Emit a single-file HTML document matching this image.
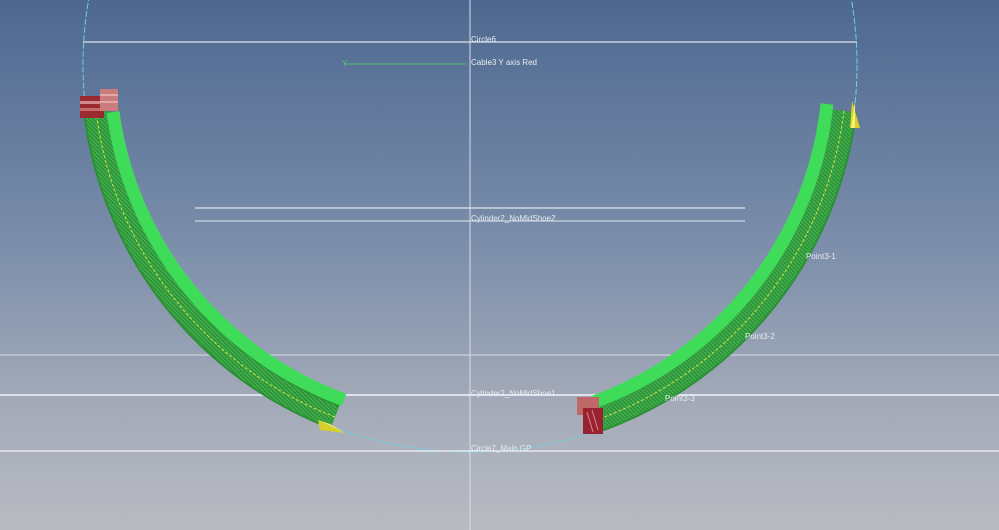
<!DOCTYPE html>
<html><head><meta charset="utf-8"><style>
html,body{margin:0;padding:0;width:999px;height:530px;overflow:hidden}
svg{display:block}
text{font-family:"Liberation Sans",sans-serif;font-size:8px;fill:#e8ecf2}
</style></head><body>
<svg width="999" height="530" viewBox="0 0 999 530" xmlns="http://www.w3.org/2000/svg">
<defs>
<linearGradient id="bg" x1="0" y1="0" x2="0" y2="1">
<stop offset="0" stop-color="#4d6890"/>
<stop offset="0.45" stop-color="#7a8daa"/>
<stop offset="0.75" stop-color="#a2a9b8"/>
<stop offset="1" stop-color="#b9bbc2"/>
</linearGradient>
<pattern id="hatch" width="4" height="4" patternUnits="userSpaceOnUse">
<rect width="4" height="4" fill="#2f9a3a"/>
<path d="M0 0L4 4" stroke="#55c060" stroke-width="1"/>
</pattern>
</defs>
<rect width="999" height="530" fill="url(#bg)"/>
<!-- cyan circle -->
<circle cx="470" cy="65" r="387" fill="none" stroke="#6fd0e0" stroke-width="1" stroke-dasharray="6 2"/>
<!-- lines -->
<line x1="470" y1="0" x2="470" y2="530" stroke="#d8dde6" stroke-width="1"/>
<line x1="83" y1="42" x2="857" y2="42" stroke="#dfe4ec" stroke-width="1.2"/>
<line x1="195" y1="208" x2="745" y2="208" stroke="#dfe4ec" stroke-width="1.2"/>
<line x1="195" y1="221" x2="745" y2="221" stroke="#dfe4ec" stroke-width="1"/>
<line x1="0" y1="355" x2="999" y2="355" stroke="#d8dce4" stroke-width="1"/>
<line x1="0" y1="395" x2="999" y2="395" stroke="#f2f4f7" stroke-width="1.5"/>
<line x1="0" y1="451" x2="999" y2="451" stroke="#f2f4f7" stroke-width="1.2"/>
<line x1="345" y1="64" x2="466" y2="64" stroke="#4fc07a" stroke-width="1"/>
<!-- left band -->
<path d="M335 417 A377 377 0 0 1 96 111" fill="none" stroke="#2b8f36" stroke-width="26"/>
<path d="M335 417 A377 377 0 0 1 96 111" fill="none" stroke="url(#hatch)" stroke-width="22" opacity="0.7"/>
<path d="M335 417 A377 377 0 0 1 96 111" fill="none" stroke="#d8e04a" stroke-width="1" stroke-dasharray="3 2"/>
<path d="M344 400 A358 358 0 0 1 113 112" fill="none" stroke="#3fdc5a" stroke-width="13"/>
<!-- right band -->
<path d="M844 111 A377 377 0 0 1 599 419" fill="none" stroke="#2b8f36" stroke-width="26"/>
<path d="M844 111 A377 377 0 0 1 599 419" fill="none" stroke="url(#hatch)" stroke-width="22" opacity="0.7"/>
<path d="M844 111 A377 377 0 0 1 599 419" fill="none" stroke="#d8e04a" stroke-width="1" stroke-dasharray="3 2"/>
<path d="M827 104 A358 358 0 0 1 594 402" fill="none" stroke="#3fdc5a" stroke-width="13"/>
<!-- red blocks -->
<rect x="80" y="96" width="24" height="22" fill="#9a2a30"/>
<rect x="80" y="101" width="24" height="3" fill="#d58a8a"/>
<rect x="80" y="108" width="24" height="3" fill="#c86a6a"/>
<rect x="100" y="89" width="18" height="22" fill="#c87c7c"/>
<rect x="100" y="94" width="18" height="2" fill="#e2a7a7"/>
<rect x="100" y="101" width="18" height="2" fill="#e2a7a7"/>
<rect x="577" y="397" width="22" height="18" fill="#c06868"/>
<rect x="583" y="408" width="20" height="26" fill="#9a2230"/>
<path d="M587 412 L593 432 M592 410 L598 430" stroke="#d98a8a" stroke-width="1"/>
<!-- yellow cones -->
<path d="M318 420 L345 433 L320 430 Z" fill="#d8d02a"/>
<path d="M318 420 L345 433 L330 424 Z" fill="#f2ea6a"/>
<path d="M852 101 L850 128 L860 128 Z" fill="#d8d02a"/>
<path d="M855 101 L851 128 L855 128 Z" fill="#f5ef7a"/>
<!-- labels -->
<text x="471" y="42">Circle6</text>
<text x="471" y="65">Cable3 Y axis Red</text>
<text x="342" y="66" style="fill:#4fc07a">Y</text>
<text x="471" y="221">Cylinder2_NoMidShoe2</text>
<text x="806" y="259">Point3-1</text>
<text x="745" y="339">Point3-2</text>
<text x="471" y="396">Cylinder2_NoMidShoe1</text>
<text x="665" y="401">Point3-3</text>
<text x="471" y="451">Circle7_Main GP</text>
</svg>
</body></html>
